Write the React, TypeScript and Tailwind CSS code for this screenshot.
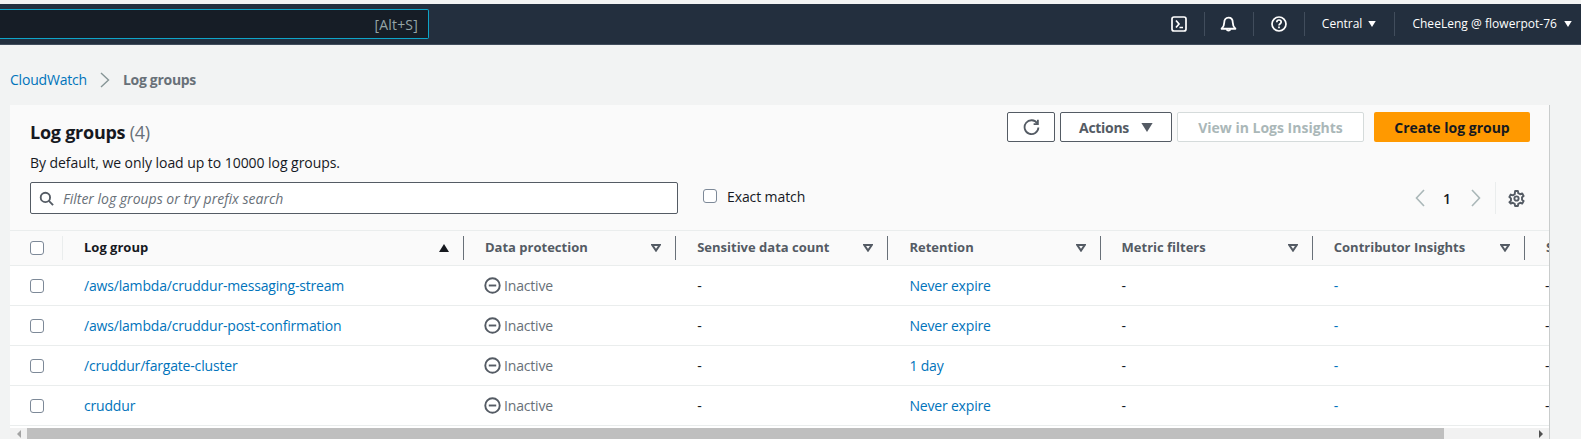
const font = "font-['Open_Sans',sans-serif]";

const rows = [
  { name: "/aws/lambda/cruddur-messaging-stream", retention: "Never expire" },
  { name: "/aws/lambda/cruddur-post-confirmation", retention: "Never expire" },
  { name: "/cruddur/fargate-cluster", retention: "1 day" },
  { name: "cruddur", retention: "Never expire" },
];

const columns = ["Data protection", "Sensitive data count", "Retention", "Metric filters", "Contributor Insights"];

function Checkbox() {
  return <span className="block w-[14px] h-[14px] bg-white border border-[#7d8998] rounded-[3px]" />;
}

function Caret({ className }: { className: string }) {
  return (
    <svg viewBox="0 0 10 8" className={className} fill="currentColor">
      <path d="M0 0h10L5 8z" />
    </svg>
  );
}

function SortDown() {
  return (
    <svg viewBox="0 0 10 8" className="w-[10px] h-[8px] text-[#545b64]" fill="none" stroke="currentColor" strokeWidth="2">
      <path d="M1.2 1h7.6L5 6.600z" />
    </svg>
  );
}

function TopNav() {
  return (
    <div className="h-[41px] bg-[#232f3e] border-b border-[#414d5c] flex items-center justify-between">
      <div className="w-[429px] h-[30px] bg-[#161d26] border border-l-0 border-[#0ea5c8] rounded-r-[2px] flex items-center justify-end pr-[10px]">
        <span className="text-[14px] tracking-[0.2px] text-[#95a5a6]">[Alt+S]</span>
      </div>
      <div className="flex items-center text-white text-[12px] h-[24px]">
        <svg viewBox="0 0 16 16" className="w-[16px] h-[16px]" fill="none" stroke="currentColor" strokeWidth="1.7">
          <rect x="1" y="1" width="14" height="14" rx="2" />
          <path d="M5 4.500l3 3.500-3 3.500M8.500 11.500H12" />
        </svg>
        <span className="w-px h-[24px] bg-[#414d5c] ml-[17px]" />
        <svg viewBox="0 0 16 16" className="w-[17px] h-[17px] ml-[15px]" fill="none" stroke="currentColor" strokeWidth="1.7">
          <path d="M8 1.500c-2.600 0-4 2-4 4.500 0 3-1 4.500-2.500 6h13C13 10.500 12 9 12 6c0-2.500-1.400-4.500-4-4.500z" strokeLinejoin="round" />
          <path d="M6.200 12.500a1.900 1.900 0 0 0 3.600 0" />
        </svg>
        <span className="w-px h-[24px] bg-[#414d5c] ml-[16px]" />
        <svg viewBox="0 0 16 16" className="w-[16px] h-[16px] ml-[17px]" fill="none" stroke="currentColor" strokeWidth="1.7">
          <circle cx="8" cy="8" r="7" />
          <path d="M5.800 6.200C5.800 4.900 6.800 4 8 4s2.200.9 2.200 2.100c0 1.600-2.200 1.700-2.200 3.400M8 10.600v1.600" />
        </svg>
        <span className="w-px h-[24px] bg-[#414d5c] ml-[17px]" />
        <span className="ml-[17px]">Central</span>
        <Caret className="w-[8px] h-[6px] ml-[6px]" />
        <span className="w-px h-[24px] bg-[#414d5c] ml-[18px]" />
        <span className="ml-[17px] tracking-[0.03px]">CheeLeng @ flowerpot-76</span>
        <Caret className="w-[8px] h-[6px] ml-[7px] mr-[9px]" />
      </div>
    </div>
  );
}

function Toolbar() {
  return (
    <div className="h-[125px] bg-[#fafafa] flex">
      <div className="flex-1 pl-[20px] pt-[16px]">
        <div className="text-[18px] leading-[22px] font-bold tracking-[-0.25px] text-[#16191f]">
          Log groups <span className="font-normal text-[#687078]">(4)</span>
        </div>
        <div className="mt-[10px] text-[14px] leading-[20px] tracking-[-0.05px] text-[#16191f]">By default, we only load up to 10000 log groups.</div>
        <div className="mt-[9px] flex items-center">
          <div className="w-[648px] h-[32px] bg-white border border-[#545b64] rounded-[2px] flex items-center pl-[8px]">
            <svg viewBox="0 0 16 16" className="w-[15px] h-[15px] text-[#545b64]" fill="none" stroke="currentColor" strokeWidth="2">
              <circle cx="6.800" cy="6.800" r="5" />
              <path d="M10.500 10.500L15 15" />
            </svg>
            <span className="ml-[9px] italic text-[14px] text-[#687078]">Filter log groups or try prefix search</span>
          </div>
          <div className="flex items-center mb-[4px]">
            <span className="ml-[25px]"><Checkbox /></span>
            <span className="ml-[10px] text-[14px] tracking-[-0.1px] text-[#16191f]">Exact match</span>
          </div>
        </div>
      </div>
      <div className="pt-[7px] pr-[19px] flex flex-col items-end">
        <div className="flex items-center h-[30px] text-[14px] font-bold">
          <button className="w-[48px] h-[30px] flex items-center justify-center bg-white border border-[#545b64] rounded-[2px] text-[#545b64]">
            <svg viewBox="0 0 16 16" className="w-[17px] h-[17px]" fill="none" stroke="currentColor" strokeWidth="1.7">
              <path d="M13.500 4.200A6.500 6.500 0 1 0 14.500 8" />
              <path d="M14 .8v4h-4" />
            </svg>
          </button>
          <button className="w-[112px] h-[30px] ml-[5px] flex items-center justify-center bg-white border border-[#545b64] rounded-[2px] text-[#545b64] tracking-[-0.3px]">
            Actions
            <Caret className="w-[12px] h-[9px] ml-[12px]" />
          </button>
          <button className="w-[187px] h-[30px] ml-[5px] bg-white border border-[#d5dbdb] rounded-[2px] text-[#aab7b8]">View in Logs Insights</button>
          <button className="w-[156px] h-[30px] ml-[10px] bg-[#ff9900] rounded-[2px] text-[#16191f]">Create log group</button>
        </div>
        <div className="flex items-center h-[32px] mt-[40px] text-[#687078]">
          <svg viewBox="0 0 10 18" className="w-[10px] h-[18px] text-[#aab7b8]" fill="none" stroke="currentColor" strokeWidth="1.600">
            <path d="M9 1L1.500 9 9 17" />
          </svg>
          <span className="ml-[18px] text-[14px] font-semibold text-[#16191f]">1</span>
          <svg viewBox="0 0 10 18" className="w-[10px] h-[18px] ml-[20px] text-[#aab7b8]" fill="none" stroke="currentColor" strokeWidth="1.600">
            <path d="M1 1l7.500 8L1 17" />
          </svg>
          <span className="w-px h-[32px] bg-[#eaeded] ml-[14px]" />
          <svg viewBox="0 0 16 16" className="w-[17px] h-[17px] ml-[12px] mr-[5px] text-[#545b64]" fill="none" stroke="currentColor" strokeWidth="1.800">
            <circle cx="8" cy="8" r="2" />
            <path d="M6.700 1h2.600l.4 2 1.800 1 1.900-.7 1.300 2.300-1.500 1.300v2.200l1.500 1.300-1.300 2.300-1.900-.7-1.800 1-.4 2H6.700l-.4-2-1.800-1-1.900.7L1.300 11.400l1.500-1.300V7.900L1.300 6.600l1.300-2.300 1.900.7 1.800-1z" strokeLinejoin="round" />
          </svg>
        </div>
      </div>
    </div>
  );
}

function Table() {
  return (
    <div className="overflow-hidden">
      <div className="w-[1700px] flex h-[36px] bg-[#fafafa] border-y border-[#eaeded] items-center text-[13px] font-bold">
        <div className="w-[53px] pl-[20px] flex items-center h-[24px] border-r border-[#eaeded]"><Checkbox /></div>
        <div className="w-[401px] h-[24px] pl-[21px] pr-[14px] flex items-center justify-between border-r border-[#687078] text-[#16191f]">
          Log group
          <Caret className="w-[10px] h-[8px] rotate-180" />
        </div>
        {columns.map((c) => (
          <div key={c} className="w-[212.2px] h-[24px] pl-[21px] pr-[14px] flex items-center justify-between border-r border-[#687078] text-[#545b64]">
            {c}
            <SortDown />
          </div>
        ))}
        <div className="pl-[21px] text-[#545b64]">Stored bytes</div>
      </div>
      {rows.map((r) => (
        <div key={r.name} className="w-[1700px] flex h-[40px] bg-white border-b border-[#eaeded] items-center text-[14px] tracking-[-0.18px]">
          <div className="w-[53px] pl-[20px]"><Checkbox /></div>
          <div className="w-[401px] pl-[21px] text-[#0073bb]">{r.name}</div>
          <div className="w-[212.2px] pl-[20px] flex items-center text-[#687078]">
            <svg viewBox="0 0 16 16" className="w-[17px] h-[17px] mr-[3px] text-[#545b64]" fill="none" stroke="currentColor" strokeWidth="1.800">
              <circle cx="8" cy="8" r="6.800" />
              <path d="M4.500 8h7" />
            </svg>
            Inactive
          </div>
          <div className="w-[212.2px] pl-[21px] text-[#16191f]">-</div>
          <div className="w-[212.2px] pl-[21px] text-[#0073bb]">{r.retention}</div>
          <div className="w-[212.2px] pl-[21px] text-[#16191f]">-</div>
          <div className="w-[212.2px] pl-[21px] text-[#0073bb]">-</div>
          <div className="pl-[20px] text-[#16191f]">-</div>
        </div>
      ))}
    </div>
  );
}

function Scrollbar() {
  return (
    <div className="flex-1 flex mt-[2px] bg-[#f1f1f1]">
      <div className="w-[17px] flex items-center justify-center">
        <span className="border-y-[4px] border-y-transparent border-r-[4px] border-r-[#a3a3a3]" />
      </div>
      <div className="w-[1417px] bg-[#bfbfbf]" />
      <div className="flex-1 flex items-center justify-end pr-[6px]">
        <span className="border-y-[4px] border-y-transparent border-l-[4px] border-l-[#505050]" />
      </div>
    </div>
  );
}

export default function App() {
  return (
    <div className={`${font} w-screen h-screen overflow-hidden bg-[#f2f3f3] pt-[4px] flex flex-col`}>
      <TopNav />
      <div className="h-[60px] pl-[10px] pt-[24px] flex items-start text-[14px] leading-[22px]">
        <span className="text-[#0073bb] tracking-[-0.2px]">CloudWatch</span>
        <svg viewBox="0 0 10 16" className="w-[10px] h-[16px] mt-[3px] ml-[13px] text-[#879596]" fill="none" stroke="currentColor" strokeWidth="1.400">
          <path d="M1 1l7.500 7L1 15" />
        </svg>
        <span className="ml-[13px] font-bold text-[#687078] tracking-[-0.3px]">Log groups</span>
      </div>
      <div className="ml-[10px] w-[1540px] flex-1 flex flex-col min-h-0 border-r border-[#c9cccc] bg-white">
        <Toolbar />
        <Table />
        <Scrollbar />
      </div>
    </div>
  );
}
